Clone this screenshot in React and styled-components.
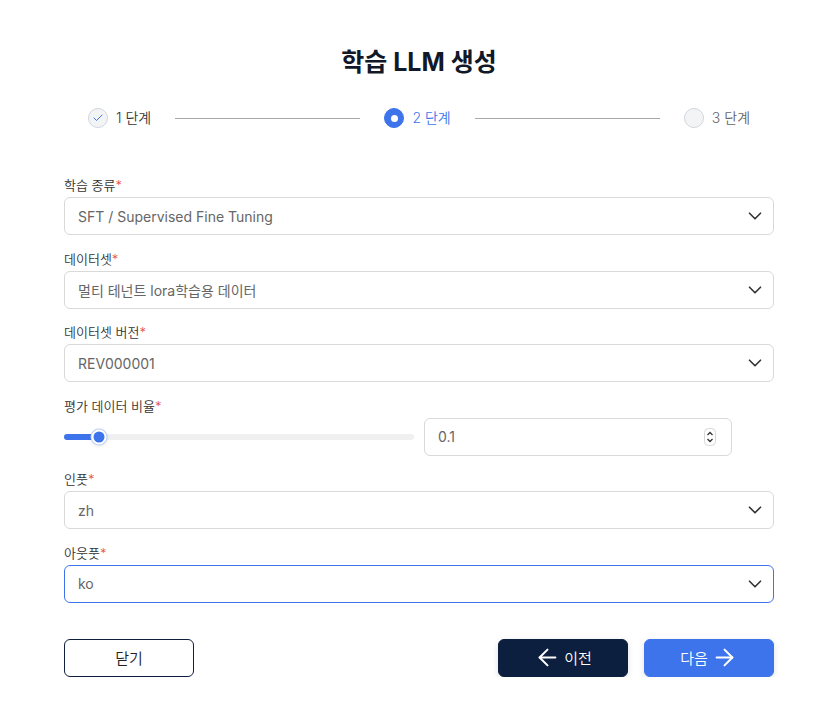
import React, { useState } from "react";
import styled, { createGlobalStyle } from "styled-components";
import { ChevronDown, ArrowLeft, ArrowRight, Check } from "lucide-react";

const GlobalStyle = createGlobalStyle`
  * { box-sizing: border-box; }
  body {
    margin: 0;
    background: #fff;
    font-family: Inter, "Noto Sans CJK KR", sans-serif;
    color: #222;
  }
`;

const steps = [
  { label: "1 단계", state: "done" },
  { label: "2 단계", state: "active" },
  { label: "3 단계", state: "todo" },
];

const fields = [
  { label: "학습 종류", value: "SFT / Supervised Fine Tuning" },
  { label: "데이터셋", value: "멀티 테넌트 lora학습용 데이터" },
  { label: "데이터셋 버전", value: "REV000001" },
];

const Chevron = () => <ChevronDown size={22} strokeWidth={1.8} color="#333" />;

export default function App() {
  const [ratio] = useState(0.1);

  return (
    <Page>
      <GlobalStyle />
      <Title>학습 LLM 생성</Title>

      <Stepper>
        {steps.map((s, i) => (
          <React.Fragment key={s.label}>
            <Step>
              <StepDot state={s.state}>
                {s.state === "done" && <Check size={12} strokeWidth={2} color="#3d74eb" />}
                {s.state === "active" && <InnerDot />}
              </StepDot>
              <StepLabel state={s.state}>{s.label}</StepLabel>
            </Step>
            {i < steps.length - 1 && <StepLine />}
          </React.Fragment>
        ))}
      </Stepper>

      <Form>
        {fields.map((f) => (
          <Field key={f.label}>
            <Label>
              {f.label}
              <Star>*</Star>
            </Label>
            <Select>
              <span>{f.value}</span>
              <Chevron />
            </Select>
          </Field>
        ))}

        <Field>
          <Label>
            평가 데이터 비율<Star>*</Star>
          </Label>
          <SliderRow>
            <Slider>
              <Track />
              <Fill style={{ width: `${ratio * 100}%` }} />
              <Thumb style={{ left: `${ratio * 100}%` }} />
            </Slider>
            <NumberBox>
              <span>{ratio}</span>
              <Spinner width="12" height="18" viewBox="0 0 12 18">
                <rect x="0.5" y="0.5" width="11" height="17" rx="4" fill="#fff" stroke="#d6d6d6" />
                <path d="M3.5 7 L6 4.5 L8.5 7" fill="none" stroke="#333" strokeWidth="1.3" />
                <path d="M3.5 11 L6 13.5 L8.5 11" fill="none" stroke="#333" strokeWidth="1.3" />
              </Spinner>
            </NumberBox>
          </SliderRow>
        </Field>

        <Field>
          <Label>
            인풋<Star>*</Star>
          </Label>
          <Select>
            <span>zh</span>
            <Chevron />
          </Select>
        </Field>

        <Field>
          <Label>
            아웃풋<Star>*</Star>
          </Label>
          <Select focused>
            <span>ko</span>
            <Chevron />
          </Select>
        </Field>
      </Form>

      <Actions>
        <Button variant="outline">닫기</Button>
        <RightGroup>
          <Button variant="dark">
            <ArrowLeft size={27} strokeWidth={1.8} />
            이전
          </Button>
          <Button variant="primary">
            다음
            <ArrowRight size={27} strokeWidth={1.8} />
          </Button>
        </RightGroup>
      </Actions>
    </Page>
  );
}

const Page = styled.div`
  width: 837px;
  padding: 46px 63px 0 64px;
`;

const Title = styled.h1`
  margin: 0;
  text-align: center;
  font-size: 25px;
  line-height: 32px;
  font-weight: 700;
  color: #111827;
`;

const Stepper = styled.div`
  margin-top: 30px;
  padding: 0 24px;
  display: flex;
  align-items: center;
  gap: 24px;
  height: 20px;
`;

const Step = styled.div`
  display: flex;
  align-items: center;
  gap: 8px;
`;

const StepDot = styled.div`
  width: 20px;
  height: 20px;
  border-radius: 50%;
  display: flex;
  align-items: center;
  justify-content: center;
  background: ${(p) => (p.state === "active" ? "#3d74eb" : "#f3f4f6")};
  border: 1px solid ${(p) => (p.state === "active" ? "#3d74eb" : "#d1d5db")};
`;

const InnerDot = styled.div`
  width: 7px;
  height: 7px;
  border-radius: 50%;
  background: #fff;
`;

const StepLabel = styled.span`
  font-size: 14px;
  line-height: 20px;
  font-weight: 350;
  white-space: nowrap;
  color: ${(p) =>
    p.state === "active" ? "#3d74eb" : p.state === "done" ? "#333" : "#666"};
`;

const StepLine = styled.div`
  flex: 1;
  height: 1px;
  background: #a8a8a8;
`;

const Form = styled.div`
  margin-top: 47px;
  display: flex;
  flex-direction: column;
  gap: 13.5px;
`;

const Field = styled.div`
  display: flex;
  flex-direction: column;
  gap: 2px;
`;

const Label = styled.label`
  font-size: 13px;
  line-height: 20px;
  font-weight: 350;
  color: #333;
`;

const Star = styled.span`
  color: #e5484d;
`;

const Select = styled.div`
  height: 38px;
  border: 1px solid ${(p) => (p.focused ? "#3d74eb" : "#d9d9d9")};
  border-radius: 6px;
  padding: 0 7px 0 13px;
  display: flex;
  align-items: center;
  justify-content: space-between;
  font-size: 14px;
  font-weight: 400;
  color: #666;
  background: #fff;
`;

const SliderRow = styled.div`
  display: flex;
  align-items: center;
  gap: 10px;
`;

const Slider = styled.div`
  position: relative;
  width: 350px;
  height: 6px;
`;

const Track = styled.div`
  position: absolute;
  inset: 0;
  border-radius: 3px;
  background: #f0f0f0;
`;

const Fill = styled.div`
  position: absolute;
  left: 0;
  top: 0;
  bottom: 0;
  border-radius: 3px;
  background: #3d74eb;
`;

const Thumb = styled.div`
  position: absolute;
  top: 50%;
  width: 15px;
  height: 15px;
  border-radius: 50%;
  background: #3d74eb;
  border: 2px solid #fff;
  box-shadow: 0 0 0 1px #bcd0f7, 0 1px 4px rgba(0, 0, 0, 0.15);
  transform: translate(-50%, -50%);
`;

const NumberBox = styled.div`
  width: 308px;
  height: 38px;
  border: 1px solid #d9d9d9;
  border-radius: 6px;
  padding: 0 15px 0 13px;
  display: flex;
  align-items: center;
  justify-content: space-between;
  font-size: 14px;
  font-weight: 400;
  color: #666;
`;

const Spinner = styled.svg`
  display: block;
`;

const Actions = styled.div`
  margin-top: 36px;
  display: flex;
  justify-content: space-between;
`;

const RightGroup = styled.div`
  display: flex;
  gap: 16px;
`;

const Button = styled.button`
  width: 130px;
  height: 38px;
  border-radius: 6px;
  display: flex;
  align-items: center;
  justify-content: center;
  gap: 3px;
  font-family: inherit;
  font-size: 15px;
  font-weight: 350;
  cursor: pointer;
  border: 1px solid
    ${(p) =>
      p.variant === "outline" ? "#0f1f3d" : p.variant === "dark" ? "#0d1f3f" : "#3d74eb"};
  background: ${(p) =>
    p.variant === "outline" ? "#fff" : p.variant === "dark" ? "#0d1f3f" : "#3d74eb"};
  color: ${(p) => (p.variant === "outline" ? "#222" : "#fff")};
  box-shadow: ${(p) => (p.variant === "outline" ? "none" : "0 2px 6px rgba(0,0,0,0.12)")};
`;
